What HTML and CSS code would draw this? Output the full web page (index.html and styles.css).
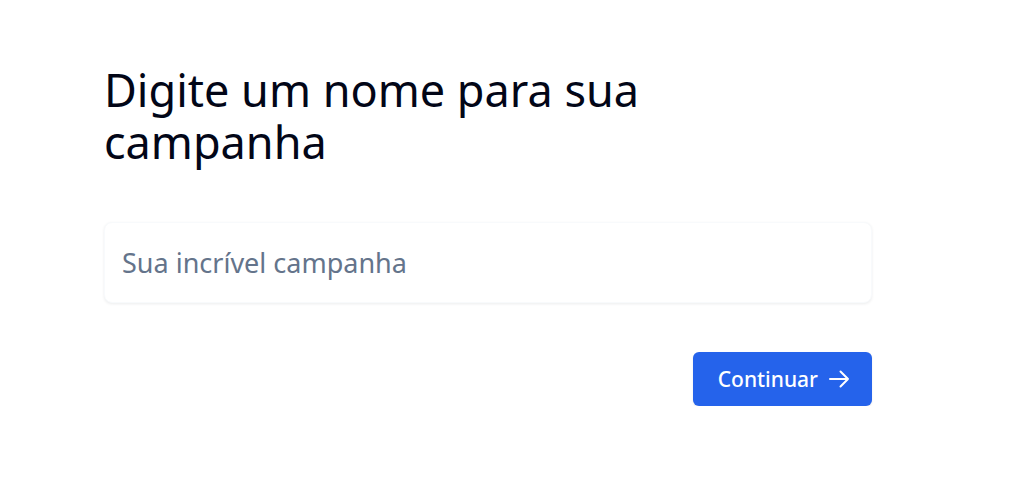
FILE: index.html
```html
<!DOCTYPE html>
<html lang="pt">
<head>
<meta charset="utf-8">
<link rel="stylesheet" href="styles.css">
</head>
<body>
<main class="page">
  <h1 class="title">Digite um nome para sua<br>campanha</h1>
  <div class="field">
    <input class="input" type="text" placeholder="Sua incrível campanha">
  </div>
  <div class="actions">
    <button class="btn" type="button">Continuar
      <svg class="icon" viewBox="0 0 24 24" width="24" height="24" fill="none" stroke="currentColor" stroke-width="2" stroke-linecap="round" stroke-linejoin="round"><path d="M13.5 4.5 21 12l-7.5 7.5M21 12H3"/></svg>
    </button>
  </div>
</main>
</body>
</html>
```
FILE: styles.css
```css
* { box-sizing: border-box; }
html, body { margin: 0; background: #fff; }
body { font-family: "Noto Sans", sans-serif; color: #020617; }
.page {
  width: 768px;
  margin-left: 104px;
  padding-top: 64px;
}
.title {
  margin: 0;
  font-size: 45px;
  line-height: 52px;
  font-weight: 400;
  color: #020617;
}
.field { margin-top: 54px; }
.input {
  display: block;
  width: 100%;
  height: 81px;
  padding: 0 17px;
  border: 1px solid #f8fafc;
  border-radius: 8px;
  box-shadow: 0 1px 3px rgba(15, 23, 42, 0.08);
  font-family: inherit;
  font-size: 27px;
  color: #0f172a;
  background: #fff;
  outline: none;
}
.input::placeholder { color: #64748b; }
.actions {
  display: flex;
  justify-content: flex-end;
  margin-top: 49px;
}
.btn {
  display: inline-flex;
  align-items: center;
  gap: 9px;
  height: 54px;
  padding: 0 21px 0 25px;
  border: 0;
  border-radius: 6px;
  background: #2563eb;
  color: #fff;
  font-family: inherit;
  font-size: 21px;
  font-weight: 500;
  box-shadow: 0 1px 2px rgba(0,0,0,0.1);
}
.icon { display: block; }
```
